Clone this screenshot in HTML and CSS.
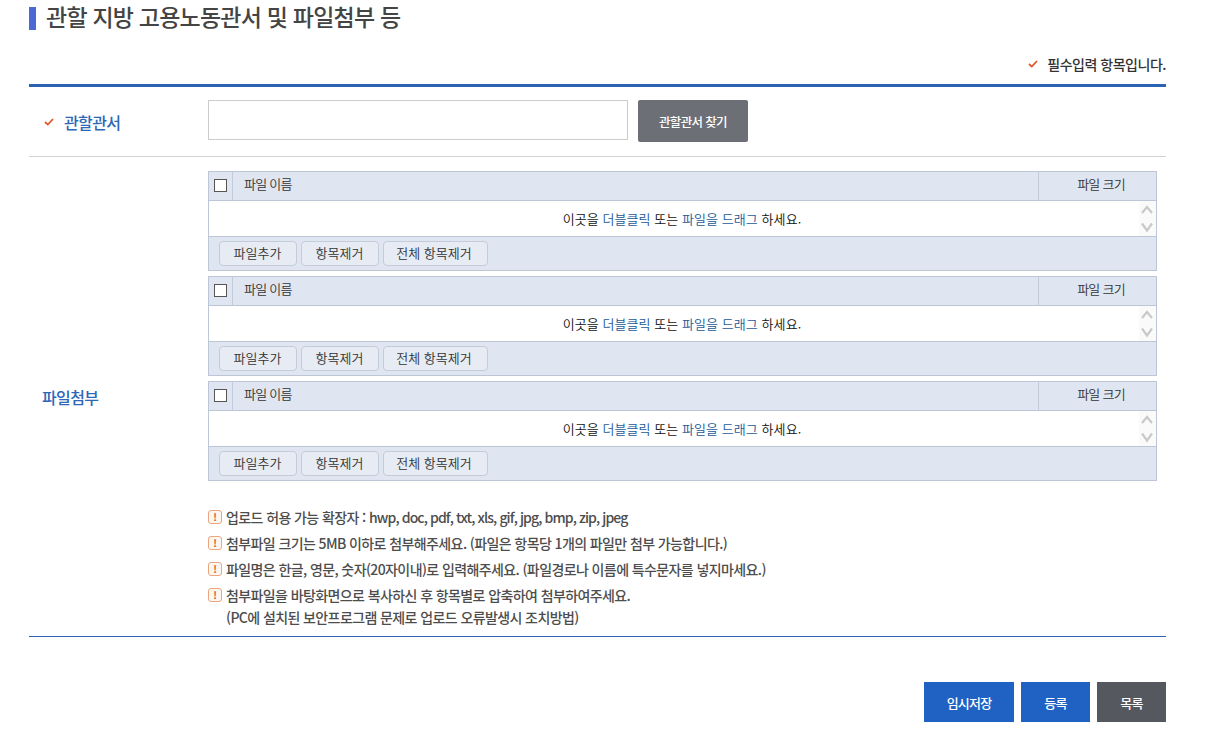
FILE: index.html
```html
<!DOCTYPE html>
<html lang="ko">
<head>
<meta charset="utf-8">
<title>파일첨부</title>
<link rel="stylesheet" href="styles.css">
</head>
<body>
<main class="page">
  <h2 class="title">관할 지방 고용노동관서 및 파일첨부 등</h2>
  <p class="required"><svg class="check" viewBox="0 0 10 8"><path d="M1 4l2.8 2.6L9 1"/></svg>필수입력 항목입니다.</p>
  <section class="form">
    <div class="row row-office">
      <div class="label label-req"><svg class="check" viewBox="0 0 10 8"><path d="M1 4l2.8 2.6L9 1"/></svg>관할관서</div>
      <div class="office-field">
        <input class="office-input" type="text" aria-label="관할관서">
        <button class="btn-find" type="button">관할관서 찾기</button>
      </div>
    </div>
    <div class="row row-files">
      <div class="label label-file">파일첨부</div>
      <div class="files">
        <div class="uploader">
          <div class="up-head"><span class="up-check"><span class="box"></span></span><span class="up-name">파일 이름</span><span class="up-size">파일 크기</span></div>
          <div class="up-body"><span>이곳을 <em>더블클릭</em> 또는 <em>파일을 드래그</em> 하세요.</span>
            <span class="scroll"><svg viewBox="0 0 12 34"><path d="M1 12L6 6l5 6M1 22.500l5 7 5-7"/></svg></span></div>
          <div class="up-foot"><button type="button">파일추가</button><button type="button">항목제거</button><button type="button">전체 항목제거</button></div>
        </div>
        <div class="uploader">
          <div class="up-head"><span class="up-check"><span class="box"></span></span><span class="up-name">파일 이름</span><span class="up-size">파일 크기</span></div>
          <div class="up-body"><span>이곳을 <em>더블클릭</em> 또는 <em>파일을 드래그</em> 하세요.</span>
            <span class="scroll"><svg viewBox="0 0 12 34"><path d="M1 12L6 6l5 6M1 22.500l5 7 5-7"/></svg></span></div>
          <div class="up-foot"><button type="button">파일추가</button><button type="button">항목제거</button><button type="button">전체 항목제거</button></div>
        </div>
        <div class="uploader">
          <div class="up-head"><span class="up-check"><span class="box"></span></span><span class="up-name">파일 이름</span><span class="up-size">파일 크기</span></div>
          <div class="up-body"><span>이곳을 <em>더블클릭</em> 또는 <em>파일을 드래그</em> 하세요.</span>
            <span class="scroll"><svg viewBox="0 0 12 34"><path d="M1 12L6 6l5 6M1 22.500l5 7 5-7"/></svg></span></div>
          <div class="up-foot"><button type="button">파일추가</button><button type="button">항목제거</button><button type="button">전체 항목제거</button></div>
        </div>
        <ul class="notes">
          <li><span class="mark">!</span>업로드 허용 가능 확장자 : <span class="latin">hwp, doc, pdf, txt, xls, gif, jpg, bmp, zip, jpeg</span></li>
          <li><span class="mark">!</span>첨부파일 크기는 5MB 이하로 첨부해주세요. (파일은 항목당 1개의 파일만 첨부 가능합니다.)</li>
          <li><span class="mark">!</span>파일명은 한글, 영문, 숫자(20자이내)로 입력해주세요. (파일경로나 이름에 특수문자를 넣지마세요.)</li>
          <li><span class="mark">!</span>첨부파일을 바탕화면으로 복사하신 후 항목별로 압축하여 첨부하여주세요.<span class="note-sub">(PC에 설치된 보안프로그램 문제로 업로드 오류발생시 조치방법)</span></li>
        </ul>
      </div>
    </div>
  </section>
  <div class="actions">
    <button class="act act-blue act-wide" type="button">임시저장</button>
    <button class="act act-blue" type="button">등록</button>
    <button class="act act-gray" type="button">목록</button>
  </div>
</main>
</body>
</html>
```
FILE: styles.css
```css
* { box-sizing: border-box; }
html, body { margin: 0; padding: 0; background: #fff; overflow: hidden; }
body { font-family: "Noto Sans CJK KR", "Noto Sans", sans-serif; color: #444; height: 729px; }
.page { width: 1137px; margin-left: 29px; }
.title {
  margin: 0; height: 37px; padding: 5px 0 0 17px; position: relative;
  font-size: 23px; font-weight: 500; line-height: 23px; letter-spacing: -0.78px; color: #444;
}
.title::before { content: ""; position: absolute; left: 0; top: 7px; width: 7px; height: 23px; background: #4a69d2; }
.required {
  margin: 0; height: 47px; padding-top: 17px; display: flex; justify-content: flex-end; align-items: flex-start;
  font-size: 14px; font-weight: 500; line-height: 20px; letter-spacing: -0.48px; color: #333;
}
.required .check { margin: 6px 9px 0 0; }
.check { width: 10px; height: 8px; fill: none; stroke: #e2562c; stroke-width: 1.8; flex: none; }
.form { border-top: 3px solid #2b62b4; border-bottom: 1px solid #2b62b4; }
.row { display: flex; }
.row-office { height: 70px; border-bottom: 1px solid #d2d2d2; }
.label { width: 179px; flex: none; display: flex; align-items: center; font-size: 16px; font-weight: 500; letter-spacing: -0.6px; color: #2d68b8; }
.label-req { padding: 1px 0 0 15px; }
.label-req .check { margin-right: 10px; }
.label-file { padding: 1px 0 0 13px; }
.office-field { display: flex; gap: 10px; padding-top: 13px; }
.office-input { width: 420px; height: 40px; border: 1px solid #ccc; background: #fff; outline: none; }
.btn-find {
  width: 110px; height: 42px; border: 0; border-radius: 2px; background: #6c6f76; color: #fff;
  font: 500 12.5px/42px "Noto Sans CJK KR", sans-serif; letter-spacing: -0.65px; padding: 1px 0 0;
}
.row-files { height: 479px; }
.row-files .label { align-self: stretch; }
.files { width: 949px; padding-top: 14px; }
.uploader { height: 100px; margin-bottom: 5px; border: 1px solid #bcc6d6; background: #dfe6f1; font-size: 13px; letter-spacing: -0.75px; color: #333; font-weight: 350; display: flex; flex-direction: column; }
.up-head { height: 29px; display: flex; align-items: center; border-bottom: 1px solid #bcc6d6; flex: none; }
.up-check { width: 24px; height: 100%; display: flex; align-items: center; justify-content: center; border-right: 1px solid #c2cbda; padding-bottom: 1px; }
.box { width: 13px; height: 13px; border: 1px solid #555; background: #fff; }
.up-name { flex: 1; padding: 0 0 5px 11px; }
.up-size { width: 118px; height: 100%; border-left: 1px solid #c2cbda; display: flex; align-items: center; justify-content: center; padding: 0 0 5px 7px; }
.up-body { height: 36px; flex: none; background: #fff; border-bottom: 1px solid #bcc6d6; display: flex; align-items: center; justify-content: center; position: relative; color: #111; font-size: 13px; letter-spacing: 0.06px; padding-right: 1px; }
.up-body em { font-style: normal; color: #1c5a96; }
.scroll { position: absolute; right: 0; top: 0; width: 17px; height: 35px; background: #fafafa; }
.scroll svg { display: block; width: 12px; height: 34px; margin-left: 2px; fill: none; stroke: #c9c9c9; stroke-width: 2.2; }
.up-foot { flex: 1; display: flex; gap: 4px; align-items: center; padding: 0 0 1px 10px; }
.up-foot button {
  height: 25px; padding: 0 0 2px; border: 1px solid #c4ccd9; border-radius: 4px; background: #e6ebf4; color: #333;
  font: 350 13px/21px "Noto Sans CJK KR", sans-serif;
}
.up-foot button:nth-child(-n+2) { width: 78px; padding-right: 1px; }
.up-foot button:nth-child(3) { width: 105px; padding-right: 3px; }
.notes { list-style: none; margin: 23px 0 0; padding: 0; font-size: 14px; font-weight: 500; line-height: 26px; letter-spacing: -0.6px; color: #4d4d4d; }
.notes li { padding-left: 18px; position: relative; }
.latin { letter-spacing: -0.9px; }
.note-sub { display: block; line-height: 18px; }
.mark {
  position: absolute; left: 0; top: 6px; width: 14px; height: 14px; border: 1px solid #e9a77f; border-radius: 3px; background: #fdf6f0;
  color: #e2562c; font-size: 10px; font-weight: 700; line-height: 12px; text-align: center; letter-spacing: 0;
}
.actions { display: flex; justify-content: flex-end; gap: 7px; margin-top: 45px; }
.act { width: 69px; height: 40px; border: 0; padding: 1px 0 0; color: #fff; font: 500 13px/40px "Noto Sans CJK KR", sans-serif; letter-spacing: -0.8px; }
.act-wide { width: 90px; }
.act-blue { background: #1f62c4; }
.act-gray { background: #56585f; }
```
